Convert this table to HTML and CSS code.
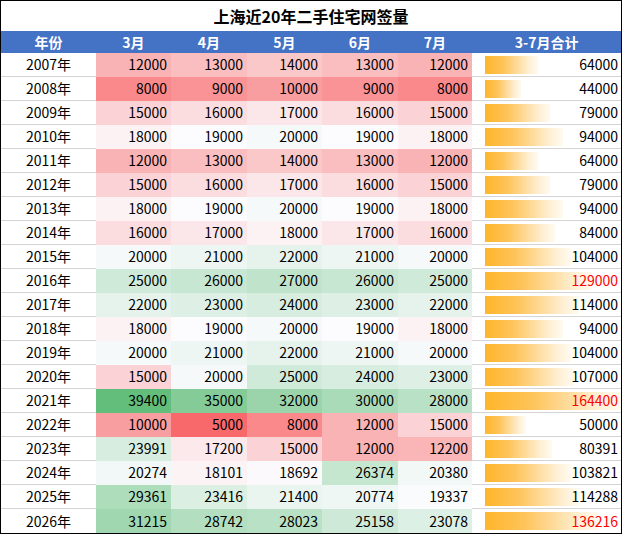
FILE: index.html
```html
<!DOCTYPE html>
<html lang="zh-CN">
<head>
<meta charset="utf-8">
<title>上海近20年二手住宅网签量</title>
<link rel="stylesheet" href="styles.css">
</head>
<body>
<div class="frame">
<table class="sheet">
<colgroup>
<col class="c-year"><col class="c-m1"><col class="c-m2"><col class="c-m3"><col class="c-m4"><col class="c-m5"><col class="c-total">
</colgroup>
<thead>
<tr class="title-row"><th colspan="7">上海近20年二手住宅网签量</th></tr>
<tr class="head-row"><th>年份</th><th>3月</th><th>4月</th><th>5月</th><th>6月</th><th>7月</th><th>3-7月合计</th></tr>
</thead>
<tbody>
<tr><td class="y">2007年</td><td class="m">12000</td><td class="m">13000</td><td class="m">14000</td><td class="m">13000</td><td class="m">12000</td><td class="t" style="background-size:53px 18px">64000</td></tr>
<tr><td class="y">2008年</td><td class="m">8000</td><td class="m">9000</td><td class="m">10000</td><td class="m">9000</td><td class="m">8000</td><td class="t" style="background-size:36px 18px">44000</td></tr>
<tr><td class="y">2009年</td><td class="m">15000</td><td class="m">16000</td><td class="m">17000</td><td class="m">16000</td><td class="m">15000</td><td class="t" style="background-size:65px 18px">79000</td></tr>
<tr><td class="y">2010年</td><td class="m">18000</td><td class="m">19000</td><td class="m">20000</td><td class="m">19000</td><td class="m">18000</td><td class="t" style="background-size:78px 18px">94000</td></tr>
<tr><td class="y">2011年</td><td class="m">12000</td><td class="m">13000</td><td class="m">14000</td><td class="m">13000</td><td class="m">12000</td><td class="t" style="background-size:53px 18px">64000</td></tr>
<tr><td class="y">2012年</td><td class="m">15000</td><td class="m">16000</td><td class="m">17000</td><td class="m">16000</td><td class="m">15000</td><td class="t" style="background-size:65px 18px">79000</td></tr>
<tr><td class="y">2013年</td><td class="m">18000</td><td class="m">19000</td><td class="m">20000</td><td class="m">19000</td><td class="m">18000</td><td class="t" style="background-size:78px 18px">94000</td></tr>
<tr><td class="y">2014年</td><td class="m">16000</td><td class="m">17000</td><td class="m">18000</td><td class="m">17000</td><td class="m">16000</td><td class="t" style="background-size:70px 18px">84000</td></tr>
<tr><td class="y">2015年</td><td class="m">20000</td><td class="m">21000</td><td class="m">22000</td><td class="m">21000</td><td class="m">20000</td><td class="t" style="background-size:86px 18px">104000</td></tr>
<tr><td class="y">2016年</td><td class="m">25000</td><td class="m">26000</td><td class="m">27000</td><td class="m">26000</td><td class="m">25000</td><td class="t hi" style="background-size:107px 18px">129000</td></tr>
<tr><td class="y">2017年</td><td class="m">22000</td><td class="m">23000</td><td class="m">24000</td><td class="m">23000</td><td class="m">22000</td><td class="t" style="background-size:94px 18px">114000</td></tr>
<tr><td class="y">2018年</td><td class="m">18000</td><td class="m">19000</td><td class="m">20000</td><td class="m">19000</td><td class="m">18000</td><td class="t" style="background-size:78px 18px">94000</td></tr>
<tr><td class="y">2019年</td><td class="m">20000</td><td class="m">21000</td><td class="m">22000</td><td class="m">21000</td><td class="m">20000</td><td class="t" style="background-size:86px 18px">104000</td></tr>
<tr><td class="y">2020年</td><td class="m">15000</td><td class="m">20000</td><td class="m">25000</td><td class="m">24000</td><td class="m">23000</td><td class="t" style="background-size:89px 18px">107000</td></tr>
<tr><td class="y">2021年</td><td class="m">39400</td><td class="m">35000</td><td class="m">32000</td><td class="m">30000</td><td class="m">28000</td><td class="t hi" style="background-size:136px 18px">164400</td></tr>
<tr><td class="y">2022年</td><td class="m">10000</td><td class="m">5000</td><td class="m">8000</td><td class="m">12000</td><td class="m">15000</td><td class="t" style="background-size:41px 18px">50000</td></tr>
<tr><td class="y">2023年</td><td class="m">23991</td><td class="m">17200</td><td class="m">15000</td><td class="m">12000</td><td class="m">12200</td><td class="t" style="background-size:67px 18px">80391</td></tr>
<tr><td class="y">2024年</td><td class="m">20274</td><td class="m">18101</td><td class="m">18692</td><td class="m">26374</td><td class="m">20380</td><td class="t" style="background-size:86px 18px">103821</td></tr>
<tr><td class="y">2025年</td><td class="m">29361</td><td class="m">23416</td><td class="m">21400</td><td class="m">20774</td><td class="m">19337</td><td class="t" style="background-size:95px 18px">114288</td></tr>
<tr class="last"><td class="y">2026年</td><td class="m">31215</td><td class="m">28742</td><td class="m">28023</td><td class="m">25158</td><td class="m">23078</td><td class="t hi" style="background-size:113px 18px">136216</td></tr>
</tbody>
</table>
</div>
<script src="script.js"></script>
</body>
</html>
```

FILE: styles.css
```css
html, body {
  margin: 0;
  padding: 0;
  background: #ffffff;
}

body {
  font-family: "Noto Sans CJK SC", "Noto Sans", "DejaVu Sans", sans-serif;
  color: #000000;
}

.frame {
  width: 620px;
  border: 1px solid #000000;
}

.sheet {
  width: 620px;
  table-layout: fixed;
  border-collapse: separate;
  border-spacing: 0;
}

.c-year { width: 95px; }
.c-m1 { width: 75px; }
.c-m2 { width: 76px; }
.c-m3 { width: 75px; }
.c-m4 { width: 76px; }
.c-m5 { width: 74px; }
.c-total { width: 149px; }

.title-row th {
  height: 30px;
  padding: 0;
  font-size: 16px;
  font-weight: 700;
  text-align: center;
  line-height: 30px;
}

.head-row th {
  height: 22px;
  padding: 0;
  background: #4472c4;
  color: #ffffff;
  font-size: 14px;
  font-weight: 700;
  text-align: center;
  line-height: 22px;
}

.sheet td {
  height: 23px;
  padding: 0;
  font-size: 14px;
  line-height: 23px;
  white-space: nowrap;
  border-bottom: 1px solid #d4d4d4;
}

.sheet td.y {
  text-align: center;
}

.sheet td.m {
  text-align: right;
  padding-right: 4px;
  border-bottom-color: transparent;
}

.sheet td.t {
  text-align: right;
  padding-right: 3px;
  background-image: linear-gradient(to right, #feb52a 0%, #fec45a 35%, #fff1d8 85%, #fffaf0 100%);
  background-repeat: no-repeat;
  background-position: 13px 3px;
}

.sheet td.hi {
  color: #ff0000;
}

.sheet tr.last td {
  border-bottom: none;
  height: 24px;
}
```

FILE: script.js
```js
(function () {
  var cells = Array.prototype.slice.call(document.querySelectorAll('td.m'));
  var vals = cells.map(function (c) { return parseFloat(c.textContent); });
  var sorted = vals.slice().sort(function (a, b) { return a - b; });
  var n = sorted.length;
  var pos = 0.5 * (n - 1);
  var lo = Math.floor(pos), hi = Math.ceil(pos);
  var mid = sorted[lo] + (sorted[hi] - sorted[lo]) * (pos - lo);
  var min = sorted[0], max = sorted[n - 1];
  var cMin = [248, 105, 107], cMid = [252, 252, 255], cMax = [99, 190, 123];
  function mix(a, b, t) {
    return a.map(function (v, i) { return Math.round(v + (b[i] - v) * t); });
  }
  cells.forEach(function (c, i) {
    var v = vals[i];
    var col = v <= mid ? mix(cMin, cMid, (v - min) / (mid - min)) : mix(cMid, cMax, (v - mid) / (max - mid));
    c.style.backgroundColor = 'rgb(' + col.join(',') + ')';
  });
})();
```
